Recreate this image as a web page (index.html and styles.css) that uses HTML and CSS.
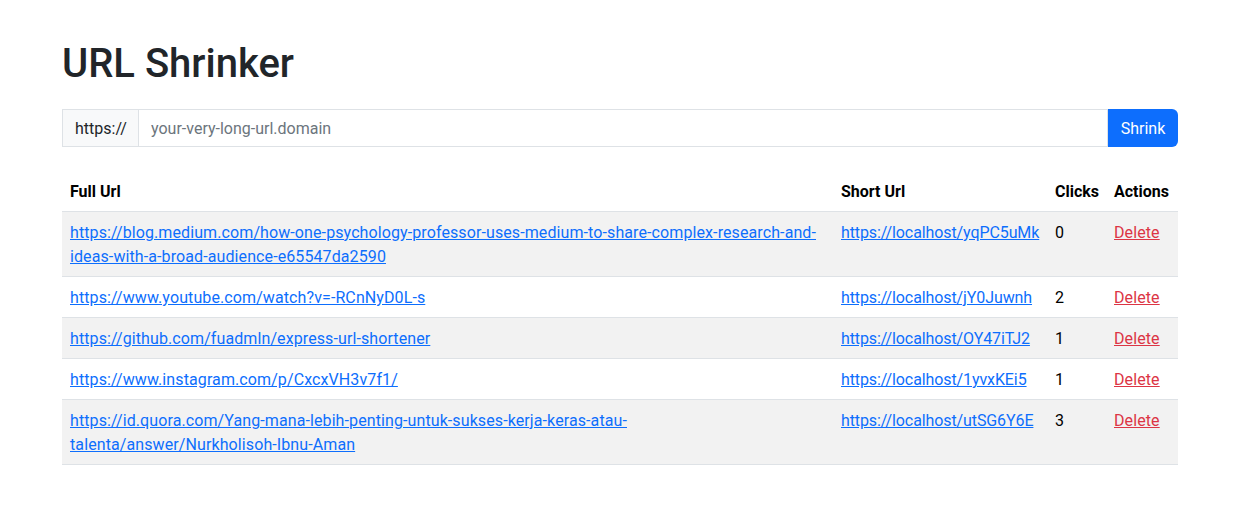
FILE: index.html
```html
<!DOCTYPE html>
<html lang="en">
<head>
<meta charset="utf-8">
<title>URL Shrinker</title>
<link rel="stylesheet" href="styles.css">
</head>
<body>
<div class="container">
  <h1 class="title">URL Shrinker</h1>
  <form class="input-group">
    <span class="prefix">https://</span>
    <input class="url-input" type="text" placeholder="your-very-long-url.domain">
    <button class="btn" type="button">Shrink</button>
  </form>
  <table class="table">
    <colgroup>
      <col class="c1"><col class="c2"><col class="c3"><col class="c4">
    </colgroup>
    <thead>
      <tr><th>Full Url</th><th>Short Url</th><th>Clicks</th><th>Actions</th></tr>
    </thead>
    <tbody>
      <tr class="odd">
        <td><a href="#">https://blog.medium.com/how-one-psychology-professor-uses-medium-to-share-complex-research-and-ideas-with-a-broad-audience-e65547da2590</a></td>
        <td class="short"><a href="#">https://localhost/yqPC5uMk</a></td>
        <td>0</td>
        <td><a class="del" href="#">Delete</a></td>
      </tr>
      <tr>
        <td><a href="#">https://www.youtube.com/watch?v=-RCnNyD0L-s</a></td>
        <td class="short"><a href="#">https://localhost/jY0Juwnh</a></td>
        <td>2</td>
        <td><a class="del" href="#">Delete</a></td>
      </tr>
      <tr class="odd">
        <td><a href="#">https://github.com/fuadmln/express-url-shortener</a></td>
        <td class="short"><a href="#">https://localhost/OY47iTJ2</a></td>
        <td>1</td>
        <td><a class="del" href="#">Delete</a></td>
      </tr>
      <tr>
        <td><a href="#">https://www.instagram.com/p/CxcxVH3v7f1/</a></td>
        <td class="short"><a href="#">https://localhost/1yvxKEi5</a></td>
        <td>1</td>
        <td><a class="del" href="#">Delete</a></td>
      </tr>
      <tr class="odd">
        <td><a href="#">https://id.quora.com/Yang-mana-lebih-penting-untuk-sukses-kerja-keras-atau-talenta/answer/Nurkholisoh-Ibnu-Aman</a></td>
        <td class="short"><a href="#">https://localhost/utSG6Y6E</a></td>
        <td>3</td>
        <td><a class="del" href="#">Delete</a></td>
      </tr>
    </tbody>
  </table>
</div>
</body>
</html>
```
FILE: styles.css
```css
*{box-sizing:border-box}
html,body{margin:0;padding:0;background:#fff}
body{font-family:Roboto,"Liberation Sans",sans-serif;font-size:16px;line-height:24px;color:#212529}
.container{width:1116px;margin-left:62px;padding-top:40px}
.title{margin:0 0 21px;font-size:40px;line-height:48px;font-weight:500;color:#212529}
.input-group{display:flex;height:38px;margin:0}
.prefix{display:flex;align-items:center;padding:1px 12px 0;width:76px;background:#f8f9fa;border:1px solid #dee2e6;border-right:0;color:#212529;font-size:16px}
.url-input{flex:1;min-width:0;height:38px;border:1px solid #dee2e6;padding:1px 12px 0;font-family:inherit;font-size:16px;color:#212529;outline:none}
.url-input::placeholder{color:#6c757d}
.btn{width:70px;height:38px;border:0;background:#0d6efd;color:#fff;font-family:inherit;font-size:16px;border-radius:0 6px 6px 0;padding:1px 0 0}
.table{width:100%;margin-top:24px;border-collapse:collapse;table-layout:fixed;color:#000;letter-spacing:0.1px}
.c1{width:771px}.c2{width:214px}.c3{width:59px}.c4{width:72px}
.table th,.table td{padding:9px 8px 7px;text-align:left;vertical-align:top;border-bottom:1px solid #dee2e6}
.table th{font-weight:700;white-space:nowrap;letter-spacing:0}
.table td.short{letter-spacing:-0.1px;white-space:nowrap}
.table tr.odd td{background:#f2f2f2}
.table a{color:#0d6efd;text-decoration:underline}
.table a.del{color:#dc3545}
```
